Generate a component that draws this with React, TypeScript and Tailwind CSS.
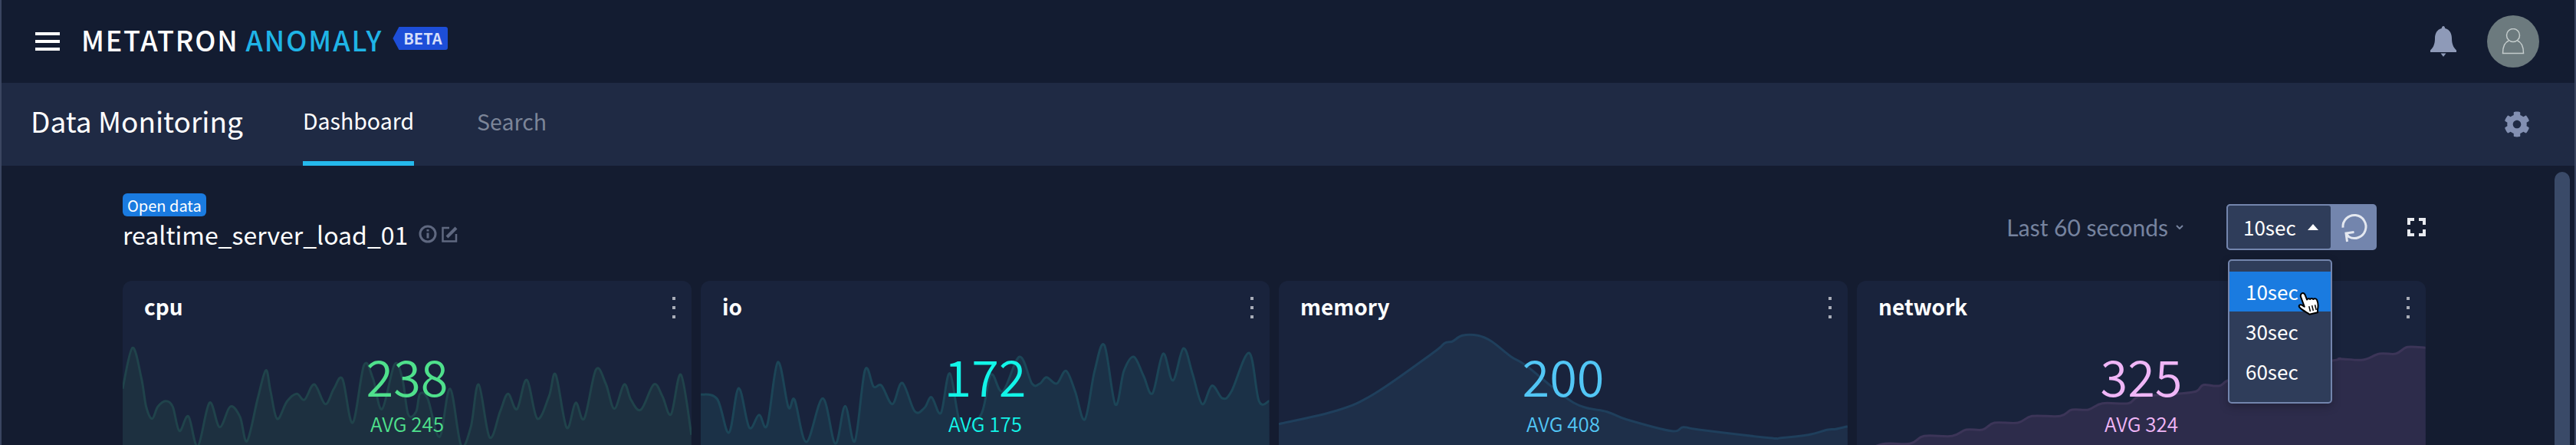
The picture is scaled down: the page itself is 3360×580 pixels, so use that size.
import { FaCog } from "react-icons/fa";

type Pt = [number, number];

// points are read off the reference crops, then scaled to card pixels
function toPath(points: Pt[], left: number, sx: number) {
  const p = points.map(([x, y]) => [(x - left) / sx, y / 3 - 6]);
  let d = `M${p[0][0]} ${p[0][1]}`;
  for (let i = 0; i < p.length - 1; i++) {
    const a = p[Math.max(i - 1, 0)];
    const b = p[i];
    const c = p[i + 1];
    const e = p[Math.min(i + 2, p.length - 1)];
    const k = 0.17;
    d += ` C${(b[0] + (c[0] - a[0]) * k).toFixed(1)} ${(b[1] + (c[1] - a[1]) * k).toFixed(1)} ${(c[0] - (e[0] - b[0]) * k).toFixed(1)} ${(c[1] - (e[1] - b[1]) * k).toFixed(1)} ${c[0].toFixed(1)} ${c[1].toFixed(1)}`;
  }
  return d;
}

const cpu: Pt[] = [[40,440],[65,280],[88,400],[100,510],[115,557],[130,510],[150,488],[168,510],[185,605],[208,548],[232,665],[262,495],[288,590],[315,510],[340,550],[358,645],[385,480],[406,368],[418,450],[435,558],[460,490],[485,460],[505,483],[530,423],[558,500],[580,440],[602,402],[628,573],[657,348],[680,400],[703,520],[735,345],[755,400],[770,540],[790,530],[800,460],[820,480],[850,628],[877,440],[905,660],[930,590],[950,423],[978,630],[1005,530],[1025,460],[1048,520],[1073,405],[1100,557],[1130,470],[1147,385],[1175,592],[1198,495],[1220,557],[1250,365],[1275,420],[1297,518],[1322,423],[1340,485],[1365,522],[1398,423],[1420,470],[1442,540],[1467,385],[1494,620]];
const io: Pt[] = [[28,462],[70,480],[100,612],[125,438],[152,592],[177,542],[198,582],[225,336],[252,512],[268,483],[298,648],[340,478],[372,655],[397,508],[422,645],[448,367],[470,432],[490,427],[518,500],[543,417],[575,528],[600,515],[618,473],[642,535],[665,380],[695,590],[745,540],[770,385],[800,450],[843,315],[875,420],[895,420],[912,395],[938,420],[962,370],[985,450],[1010,560],[1035,370],[1060,270],[1088,502],[1110,370],[1135,315],[1160,390],[1183,458],[1210,303],[1235,408],[1262,282],[1285,380],[1310,500],[1335,428],[1362,478],[1385,450],[1430,300],[1455,488],[1481,488]];
const memory: Pt[] = [[16,578],[165,525],[262,458],[410,300],[440,262],[460,255],[485,232],[525,232],[560,255],[610,315],[650,352],[770,495],[855,530],[905,560],[1020,605],[1050,590],[1090,600],[1270,632],[1300,632],[1370,620],[1420,600],[1440,598],[1470,587]];
const network: Pt[] = [[37,700],[90,657],[150,655],[180,625],[240,625],[270,600],[305,600],[330,573],[380,573],[410,547],[470,547],[495,522],[530,522],[560,497],[615,497],[640,470],[720,460],[760,450],[775,425],[810,428],[850,395],[1050,330],[1065,323],[1115,327],[1150,303],[1185,303],[1210,277],[1248,280]];

const cards = [
  { name: "cpu", value: "238", avg: "AVG 245", text: "text-[#4fe08c]", fill: "#1d3040", stroke: "#20434b", points: cpu, left: 40, sx: 1.96 },
  { name: "io", value: "172", avg: "AVG 175", text: "text-[#12f5e8]", fill: "#1b3147", stroke: "#1c4557", points: io, left: 28, sx: 1.96 },
  { name: "memory", value: "200", avg: "AVG 408", text: "text-[#52c6f5]", fill: "#1e2f49", stroke: "#1f3f5c", points: memory, left: 16, sx: 1.96 },
  { name: "network", value: "325", avg: "AVG 324", text: "text-[#f0b6f7]", fill: "#2d2c4b", stroke: "#3c3558", points: network, left: 37, sx: 1.633 },
];

function MetricCard({ card }: { card: (typeof cards)[number] }) {
  const line = toPath(card.points, card.left, card.sx);
  return (
    <div className="relative h-[300px] overflow-hidden rounded-xl bg-[#19233c]">
      <svg className="absolute left-0 top-0" width="742" height="300" viewBox="0 0 742 300">
        <path d={`${line} L742 300 L0 300 Z`} fill={card.fill} />
        <path d={line} fill="none" stroke={card.stroke} strokeWidth="3" />
      </svg>
      <div className="relative flex items-start justify-between pl-7 pr-[21px] pt-[14px]">
        <span className="text-[28px] font-bold leading-[38px] text-white">{card.name}</span>
        <span className="mt-[7px] flex flex-col gap-2">
          <i className="h-1 w-1 bg-[#a9adb8]" />
          <i className="h-1 w-1 bg-[#a9adb8]" />
          <i className="h-1 w-1 bg-[#a9adb8]" />
        </span>
      </div>
      <div className={`relative mt-[35px] flex flex-col items-center ${card.text}`}>
        <span className="text-[65px] font-[350] leading-[72px]">{card.value}</span>
        <span className="mt-[11px] text-[26px] font-[350] leading-8">{card.avg}</span>
      </div>
    </div>
  );
}

function Bell() {
  return (
    <svg width="34" height="40" viewBox="0 0 34 40" fill="#8e9ab8">
      <path d="M17 0c1.500 0 2 1.500 2.300 3C25.500 4.500 28 10 28 16c0 7 2 12 6 15.500V34H0v-2.500C4 28 6 23 6 16 6 10 8.500 4.500 14.700 3 15 1.500 15.500 0 17 0z" />
      <path d="M13.500 35.500h7L17 40z" />
    </svg>
  );
}

function UserAvatar() {
  return (
    <div className="flex h-[68px] w-[68px] items-center justify-center rounded-full bg-[#6c7a7e]">
      <svg width="30" height="34" viewBox="0 0 30 34" fill="none" stroke="#c4cccc" strokeWidth="1.500">
        <ellipse cx="15" cy="9" rx="8.500" ry="8.500" />
        <path d="M9.500 16C4 18 1.500 24 1.500 32.500h27C28.500 24 26 18 20.500 16" />
      </svg>
    </div>
  );
}

function InfoEditIcons() {
  return (
    <span className="ml-[14px] flex items-center gap-[6px]">
      <svg width="24" height="24" viewBox="0 0 24 24" fill="none" stroke="#5f6880" strokeWidth="3">
        <circle cx="12" cy="12" r="10" />
        <path d="M12 10.500v7M12 6v2.500" />
      </svg>
      <svg width="21" height="22" viewBox="0 0 21 22" fill="none" stroke="#5f6880" strokeWidth="2.500">
        <path d="M10 3H1.500v17.500H19V11" />
        <path d="M7 15l12-12" strokeWidth="4" />
      </svg>
    </span>
  );
}

function RefreshIcon() {
  return (
    <svg width="40" height="42" viewBox="0 0 40 42" fill="none" stroke="#e4e8f0" strokeWidth="3">
      <path d="M5 21.700A15 15 0 1 1 12.500 33.500L9 29" />
      <path d="M19.500 27.500L9 29l1.500 11" />
    </svg>
  );
}

function ExpandIcon() {
  return (
    <svg width="24" height="24" viewBox="0 0 24 24" fill="none" stroke="#e8eaef" strokeWidth="4">
      <path d="M2 9V2h7M15 2h7v7M22 15v7h-7M9 22H2v-7" />
    </svg>
  );
}

function HandCursor() {
  return (
    <svg className="absolute left-[89px] top-[25px]" width="30" height="34" viewBox="0 0 30 34">
      <g transform="rotate(-14 15 17)">
        <path
          d="M8 2c1.500-1.500 4-.5 4.500 2l1 7c1-1 3.500-1 4 .5 1-1 3.500-1 4 1 1.500-.8 4-.2 4.500 2 .5 3 0 8-2 12l-1 4H12l-2-2.500C7 25 3.500 22 1.500 18c-.8-2 1.500-3.500 3.500-2l3 3L6.500 5C6.500 4 7 3 8 2z"
          fill="#fff"
          stroke="#000"
          strokeWidth="2"
          strokeLinejoin="round"
        />
        <path d="M14 20v7M18 20v7M22 20v7" stroke="#000" strokeWidth="1.500" />
      </g>
    </svg>
  );
}

function RefreshControl() {
  return (
    <div className="relative">
      <div className="flex h-[60px] w-[196px] overflow-hidden rounded-[5px] bg-[#7385ad]">
        <div className="flex w-[138px] items-center justify-between rounded-[5px] border-2 border-[#7385ad] bg-[#2f3d5a] pl-[20px] pr-[16px]">
          <span className="pb-[2px] text-[26px] text-white">10sec</span>
          <svg width="14" height="8" viewBox="0 0 14 8" fill="#fff">
            <path d="M7 0l7 8H0z" />
          </svg>
        </div>
        <div className="flex flex-1 items-center justify-center">
          <RefreshIcon />
        </div>
      </div>
      <div className="absolute left-[2px] top-[72px] z-10 h-[188px] w-[136px] rounded-[5px] border-2 border-[#7385ad] bg-[#2f3d5a] pt-[14px] shadow-[0_4px_12px_rgba(0,0,0,0.25)]">
        <div className="relative flex h-[52px] items-center bg-[#1a7be0] pb-[2px] pl-[21px] text-[26px] text-white">
          10sec
          <HandCursor />
        </div>
        <div className="flex h-[52px] items-center pb-[2px] pl-[21px] text-[26px] text-white">30sec</div>
        <div className="flex h-[52px] items-center pb-[2px] pl-[21px] text-[26px] text-white">60sec</div>
      </div>
    </div>
  );
}

export default function App() {
  return (
    <div className="relative flex h-screen flex-col overflow-hidden border-x-2 border-[#3a4560] bg-[#141c30] font-['Noto_Sans_CJK_KR',sans-serif]">
      <header className="flex h-[108px] shrink-0 items-center justify-between bg-[#131c31] pl-[44px] pr-[46px]">
        <div className="flex items-center">
          <svg width="32" height="24" viewBox="0 0 32 24" fill="#fff">
            <rect width="32" height="4" />
            <rect y="10" width="32" height="4" />
            <rect y="20" width="32" height="4" />
          </svg>
          <span className="ml-[28px] -mt-[6px] text-[36px] font-medium leading-none tracking-[1.8px] text-white">METATRON</span>
          <span className="ml-[9px] -mt-[6px] text-[36px] font-medium leading-none tracking-[2px] text-[#1fb4e6]">ANOMALY</span>
          <span className="relative ml-[13px] -mt-[8px] flex h-[30px] w-[72px] items-center justify-center rounded-[3px] bg-[#1d4ed8] pl-[6px] text-[20px] font-bold text-[#d5defa] [clip-path:polygon(8px_0,100%_0,100%_100%,8px_100%,0_50%)]">
            BETA
          </span>
        </div>
        <div className="flex items-center gap-[40px]">
          <Bell />
          <UserAvatar />
        </div>
      </header>

      <nav className="flex h-[108px] shrink-0 items-stretch justify-between bg-[#1f2a44] pl-[38px] pr-[58px]">
        <div className="flex items-stretch">
          <h1 className="flex items-center pb-[8px] text-[37px] text-white">Data Monitoring</h1>
          <a className="ml-[78px] flex items-center pb-[4px] border-b-[6px] border-[#25b9ec] text-[28.5px] text-white">Dashboard</a>
          <a className="ml-[82px] flex items-center pb-[7px] text-[28.5px] text-[#7c8598]">Search</a>
        </div>
        <div className="flex items-center">
          <FaCog className="text-[34px] text-[#8390b2]" />
        </div>
      </nav>

      <main className="relative min-h-0 flex-1 pl-[158px]">
        <div className="w-[3004px]">
          <div className="flex h-[150px] items-start justify-between">
            <div className="pt-9">
              <span className="inline-block h-[30px] rounded-md bg-[#1a7be0] px-[6px] text-[20px] leading-[31px] text-white">Open data</span>
              <div className="mt-[1px] flex items-center text-[32px] leading-[44px] text-white">
                realtime_server_load_01
                <InfoEditIcons />
              </div>
            </div>
            <div className="flex items-center pt-[50px]">
              <span className="font-['Lato',sans-serif] text-[30px] text-[#76839f]">Last 60 seconds</span>
              <svg className="ml-[10px]" width="10" height="6" viewBox="0 0 10 6" fill="none" stroke="#76839f" strokeWidth="2">
                <path d="M1 1l4 4 4-4" />
              </svg>
              <div className="ml-[56px]">
                <RefreshControl />
              </div>
              <div className="ml-[40px]">
                <ExpandIcon />
              </div>
            </div>
          </div>
          <div className="grid grid-cols-4 gap-[12px]">
            {cards.map((card) => (
              <MetricCard key={card.name} card={card} />
            ))}
          </div>
        </div>
        <div className="absolute right-[6px] top-2 h-[400px] w-5 rounded-t-full bg-[#3a4a68]" />
      </main>
    </div>
  );
}
